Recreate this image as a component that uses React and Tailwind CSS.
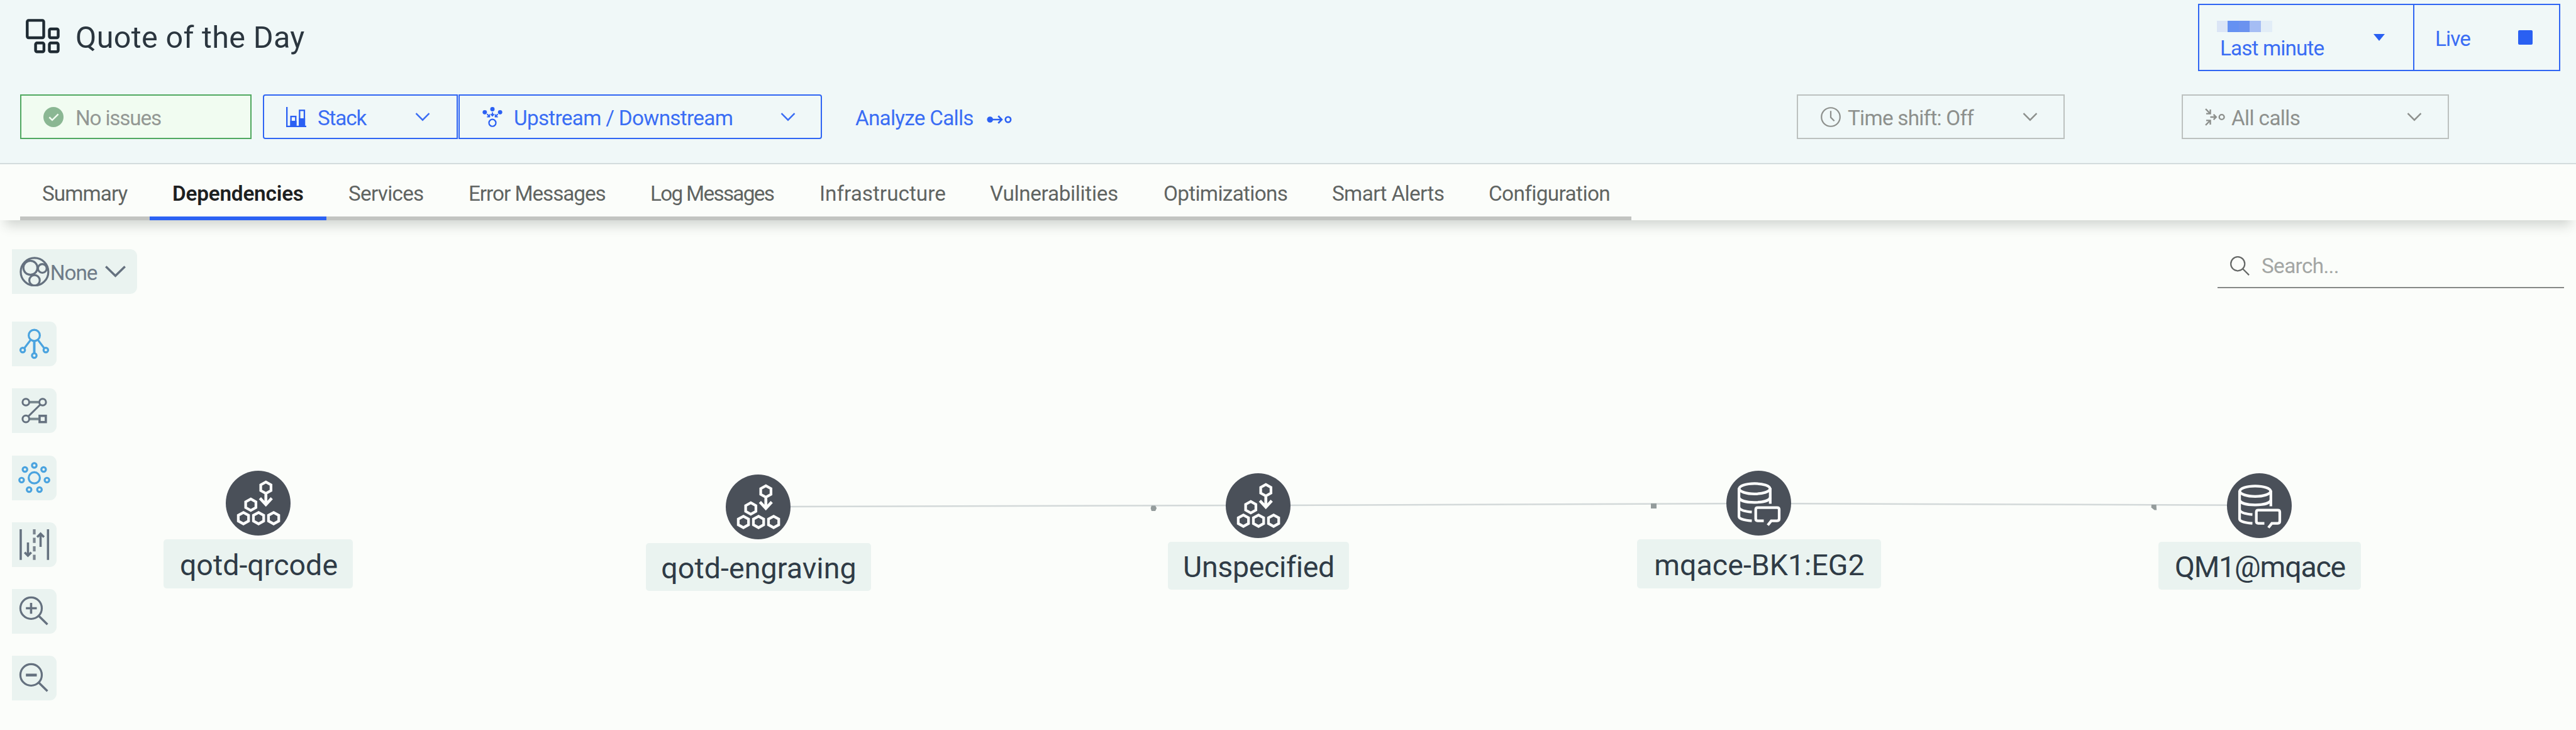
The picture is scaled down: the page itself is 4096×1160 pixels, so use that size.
const BLUE = "#2b60f3";

function Chevron({ className = "" }) {
  return (
    <svg viewBox="0 0 24 14" className={`h-[14px] w-[24px] ${className}`} fill="none" stroke="currentColor" strokeWidth="2.4">
      <path d="M1.5 1.2 L12 11.7 L22.5 1.2" />
    </svg>
  );
}

function AppIcon() {
  return (
    <svg viewBox="0 0 61 62" className="h-[55px] w-[54px]" fill="none" stroke="#1f2b33" strokeWidth="5">
      <rect x="2.6" y="2.6" width="29.6" height="31.2" rx="2.5" />
      <rect x="42.4" y="18" width="15.8" height="15.8" rx="2.5" />
      <rect x="17.6" y="43.2" width="15" height="15.8" rx="2.5" />
      <rect x="42.4" y="43.2" width="15.8" height="15.8" rx="2.5" />
    </svg>
  );
}

function CheckIcon() {
  return (
    <svg viewBox="0 0 36 36" className="size-8">
      <circle cx="18" cy="18" r="18" fill="#8ab793" />
      <path d="M10.5 18.3 L15.8 23.4 L26.6 12.8" fill="none" stroke="#f1fcf1" strokeWidth="2.8" />
    </svg>
  );
}

function StackIcon() {
  return (
    <svg viewBox="0 0 36 36" className="size-8" fill="none" stroke={BLUE} strokeWidth="2.6">
      <path d="M1.3 0 V34.7 H36" />
      <rect x="8.6" y="17" width="8.6" height="18" />
      <rect x="8.6" y="26" width="8.6" height="9" fill={BLUE} />
      <rect x="24" y="6" width="8.6" height="29" />
      <rect x="24" y="21.5" width="8.6" height="13" fill={BLUE} />
    </svg>
  );
}

function StreamIcon() {
  return (
    <svg viewBox="0 0 36 36" className="size-8" fill="none" stroke={BLUE} strokeWidth="2.5">
      <circle cx="18" cy="3.9" r="3.9" fill={BLUE} stroke="none" />
      <circle cx="4.3" cy="9.4" r="3.9" fill={BLUE} stroke="none" />
      <circle cx="31.7" cy="9.4" r="3.9" fill={BLUE} stroke="none" />
      <circle cx="18" cy="28.4" r="6.2" />
      <path d="M18 9.5 V16 M15 12.6 L18 15.8 L21 12.6" strokeWidth="2.1" />
      <path d="M8.4 12.6 L12.4 17.2 M12.8 12.8 V17.6 H8.2" strokeWidth="2.1" />
      <path d="M27.6 12.6 L23.6 17.2 M23.2 12.8 V17.6 H27.8" strokeWidth="2.1" />
    </svg>
  );
}

function CallsIcon() {
  return (
    <svg viewBox="0 0 45 16" className="h-[14px] w-[40px]" fill="none" stroke={BLUE} strokeWidth="3">
      <circle cx="5.6" cy="8" r="4" fill={BLUE} />
      <path d="M9 8 H27 M20.5 1.4 L27 8 L20.5 14.6" />
      <circle cx="38.4" cy="8" r="4.8" />
    </svg>
  );
}

function ClockIcon() {
  return (
    <svg viewBox="0 0 36 36" className="size-8" fill="none" stroke="currentColor" strokeWidth="2.5">
      <circle cx="18" cy="18" r="16.6" />
      <path d="M18 7 V18.6 L24.4 25" />
    </svg>
  );
}

function AllCallsIcon() {
  return (
    <svg viewBox="0 0 36 36" className="size-8" fill="none" stroke="currentColor" strokeWidth="2.7">
      <path d="M1.2 3.6 L9.4 11.8 M9.6 4.6 V12 H2.2" />
      <path d="M1.2 32.4 L9.4 24.2 M9.6 31.4 V24 H2.2" />
      <path d="M9.5 18 H20 M15.4 13.4 L20 18 L15.4 22.6" />
      <circle cx="30" cy="18" r="4.4" />
    </svg>
  );
}

function BubblesIcon() {
  return (
    <svg viewBox="0 0 54 54" className="size-[47.8px] shrink-0" fill="none" stroke="#65717f" strokeWidth="3.6">
      <circle cx="27" cy="27" r="24.8" />
      <circle cx="19.6" cy="19.8" r="12.6" />
      <circle cx="41" cy="21" r="7.8" />
      <circle cx="27" cy="42.4" r="9.4" />
    </svg>
  );
}

const SLATE = "#65717f";
const SKY = "#4aa3df";

function TreeGlyph() {
  return (
    <g stroke={SKY} strokeWidth="3.6">
      <circle cx="40" cy="24.7" r="10" />
      <path d="M33.4 33 L22 47.8 M46.6 33 L58 47.8" />
      <path d="M40 34 V57" strokeWidth="4.4" />
      <circle cx="19.3" cy="51" r="4.1" />
      <circle cx="40" cy="60.8" r="4.1" />
      <circle cx="60.7" cy="51" r="4.1" />
    </g>
  );
}

function PathGlyph() {
  return (
    <g stroke={SLATE} strokeWidth="3.4">
      <path d="M32 24.8 H48 M32 55 H48" strokeWidth="4.4" stroke="#7b8a91" />
      <path d="M50.4 29.6 L29.6 50" />
      <circle cx="25" cy="24.8" r="6" />
      <circle cx="55" cy="24.8" r="6" />
      <circle cx="25" cy="54.8" r="6" />
      <rect x="49.5" y="49.3" width="11.2" height="11.2" strokeWidth="4" />
    </g>
  );
}

const ORBIT = [[40, 17.5], [23.3, 24.8], [56.7, 24.8], [17.3, 43.8], [62.7, 43.8], [30.7, 60.8], [49.3, 60.8]];

function OrbitGlyph() {
  return (
    <g stroke={SKY} strokeWidth="3.6">
      <circle cx="40" cy="39.8" r="10" />
      {ORBIT.map(([x, y]) => (
        <circle key={`${x}-${y}`} cx={x} cy={y} r="4.1" />
      ))}
    </g>
  );
}

function LanesGlyph() {
  return (
    <g stroke={SLATE} strokeWidth="4">
      <path d="M15.7 12.5 V67.3 M64.6 12.5 V67.3" />
      <path d="M40 12.5 V67.3" strokeWidth="4.8" strokeDasharray="9.2 6" stroke="#7b858f" />
      <path d="M28.7 36 V60 M22.8 53.8 L28.7 59.8 L34.6 53.8" />
      <path d="M51.3 44 V20.5 M45.2 26.4 L51.3 20.4 L57.4 26.4" />
    </g>
  );
}

function ZoomGlyph({ plus }) {
  return (
    <g stroke={SLATE} strokeWidth="3.6">
      <circle cx="34.3" cy="34.3" r="19.2" />
      <path d="M47.8 47.8 L63.6 63.4" strokeWidth="3.9" />
      {plus ? <path d="M25 34.3 H44.5 M34.3 24.8 V44.2" strokeWidth="4" /> : <path d="M25 34.6 H44.5" strokeWidth="5" />}
    </g>
  );
}

const TOOLS = [
  ["hierarchy", <TreeGlyph key="t" />],
  ["path", <PathGlyph key="p" />],
  ["orbit", <OrbitGlyph key="o" />],
  ["lanes", <LanesGlyph key="l" />],
  ["zoom in", <ZoomGlyph key="zi" plus />],
  ["zoom out", <ZoomGlyph key="zo" />],
];

const hex = (cx, cy, r = 10.2) => {
  const w = r * 0.9;
  return `M${cx} ${cy - r} L${cx + w} ${cy - r / 2} V${cy + r / 2} L${cx} ${cy + r} L${cx - w} ${cy + r / 2} V${cy - r / 2} Z`;
};

function ServiceIcon() {
  return (
    <svg viewBox="0 0 116 116" className="size-[103px]" fill="none" stroke="#fcfdfc" strokeWidth="4.8">
      <circle cx="58" cy="58" r="58" fill="#4a5059" stroke="none" />
      <path d={hex(71.8, 30.4)} />
      <path d={hex(44.8, 60.8)} />
      <path d={hex(31.6, 84.9)} />
      <path d={hex(58.7, 84.9)} />
      <path d={hex(85.7, 84.9)} />
      <path d="M71.8 42 V60 M61.2 49.2 L71.8 60.6 L82.4 49.2" strokeWidth="5.2" />
    </svg>
  );
}

function QueueIcon() {
  return (
    <svg viewBox="0 0 116 116" className="size-[103px]" fill="none" stroke="#fcfdfc" strokeWidth="4.8">
      <circle cx="58" cy="58" r="58" fill="#4a5059" stroke="none" />
      <ellipse cx="50.6" cy="32.2" rx="27.6" ry="9.2" />
      <path d="M22.6 31 V82 C22.6 86 32 88.8 45.6 89.6 M78.6 31 V59" />
      <path d="M22.6 48 C24 53.6 36 56.6 50.6 56.6 C65 56.6 77 53.6 78.6 48" />
      <path d="M22.6 65.4 C24 69.6 32 72.8 45.6 73.8" />
      <path d="M67 89.6 H56 Q52.6 89.6 52.6 86 V69.6 Q52.6 66 56 66 H91 Q94.6 66 94.6 69.6 V86 Q94.6 89.6 91 89.6 H80.4 L74.2 97.4" />
    </svg>
  );
}

const TABS = [
  ["Summary", "w-[206px] pl-[35px] tracking-[-0.95px]"],
  ["Dependencies", "w-[281px] pl-[36px] tracking-[-0.2px]"],
  ["Services", "w-[192px] pl-[35px] tracking-[-0.75px]"],
  ["Error Messages", "w-[290px] pl-[34px] tracking-[-1.05px]"],
  ["Log Messages", "w-[268px] pl-[33px] tracking-[-1.7px]"],
  ["Infrastructure", "w-[271px] pl-[34px] tracking-[0px]"],
  ["Vulnerabilities", "w-[276px] pl-[34px] tracking-[-0.33px]"],
  ["Optimizations", "w-[268px] pl-[34px] tracking-[-0.68px]"],
  ["Smart Alerts", "w-[250px] pl-[34px] tracking-[-0.65px]"],
  ["Configuration", "w-[260px] pl-[33px] tracking-[-0.6px]"],
];

/* x, y: centre of the circle on the canvas */
const NODES = [
  { label: "qotd-qrcode", x: 410.5, y: 449, h: 78, w: 301, track: "tracking-[0.04px]", Icon: ServiceIcon },
  { label: "qotd-engraving", x: 1205.5, y: 455.5, h: 76, w: 358, track: "tracking-[0.1px]", Icon: ServiceIcon },
  { label: "Unspecified", x: 2000.5, y: 453.5, h: 76, w: 288, track: "tracking-[-0.35px]", Icon: ServiceIcon },
  { label: "mqace-BK1:EG2", x: 2796.5, y: 449, h: 78, w: 388, track: "tracking-[0.02px]", Icon: QueueIcon },
  { label: "QM1@mqace", x: 3592.5, y: 453.5, h: 76, w: 322, track: "tracking-[-1.2px]", Icon: QueueIcon },
];

function Node({ node }) {
  const { Icon } = node;
  return (
    <div
      className="absolute flex flex-col items-center gap-[6px]"
      style={{ left: node.x - node.w / 2, top: node.y - 51.5, width: node.w }}
    >
      <Icon />
      <div
        className={`flex w-full items-center justify-center rounded-[5px] bg-[#eaf3f0] pt-[5px] pl-[2px] text-[46.5px] leading-none whitespace-nowrap text-[#2f3b46] ${node.track}`}
        style={{ height: node.h }}
      >
        {node.label}
      </div>
    </div>
  );
}

export default function App() {
  return (
    <div className="flex h-[1160px] w-[4096px] flex-col overflow-hidden bg-[#fbfdfa] font-['Roboto',sans-serif] text-[33.3px] leading-none whitespace-nowrap">
      <header className="flex h-[261px] shrink-0 flex-col border-b-2 border-[#d3dcdd] bg-[#f0f8f8]">
        <div className="mt-[6px] flex h-[107px] justify-between pr-[25px] pl-[41px]">
          <div className="flex items-center">
            <div className="-mt-1">
              <AppIcon />
            </div>
            <h1 className="ml-[25px] pt-px text-[48.5px] tracking-[0.35px] text-[#2b363f]">Quote of the Day</h1>
          </div>
          <div className="flex w-[576px] border-2 border-[#2f65f3] text-[#3a6df4]">
            <div className="flex w-[342px] items-center border-r-2 border-[#2f65f3] pl-[28px]">
              <div className="flex h-full w-[230px] flex-col pt-[25px]">
                <div className="flex h-[18px]">
                  <span className="w-[17px] bg-[#dbe5f6]" />
                  <span className="w-[18px] bg-[#6591f2]" />
                  <span className="w-[17px] bg-[#6b92ef]" />
                  <span className="w-[18px] bg-[#a5bdf4]" />
                  <span className="w-[18px] bg-[#e2edf7]" />
                </div>
                <div className="mt-[9px] pl-[5px] tracking-[-0.88px]">Last minute</div>
              </div>
              <svg viewBox="0 0 18 11" className="ml-[19px] h-[11px] w-[18px]">
                <path d="M0 0 H18 L9 11 Z" fill="#2a60f2" />
              </svg>
            </div>
            <div className="flex flex-1 items-center justify-between pr-[42px] pl-[33px]">
              <span className="pt-[4px] tracking-[-0.87px]">Live</span>
              <span className="size-[23px] rounded-[2px] bg-[#2a60f2]" />
            </div>
          </div>
        </div>

        <div className="mt-[37px] flex h-[71px] items-stretch pr-[202px] pl-[32px]">
          <div className="flex w-[368px] items-center border-2 border-[#50a860] bg-[#f1fcf1] pl-[35px] text-[#939894]">
            <CheckIcon />
            <span className="ml-[19px] pt-[5px] tracking-[-1.2px]">No issues</span>
          </div>
          <div className="ml-[18px] flex w-[310px] items-center rounded-l-[4px] border-2 border-[#2f65f3] text-[#3a6df4]">
            <div className="ml-[35px]">
              <StackIcon />
            </div>
            <span className="ml-[18px] flex-1 pt-[5px] tracking-[-1.2px]">Stack</span>
            <Chevron className="mr-[42px]" />
          </div>
          <div className="ml-[1px] flex w-[578px] items-center rounded-r-[4px] border-2 border-[#2f65f3] text-[#3a6df4]">
            <div className="ml-[36px]">
              <StreamIcon />
            </div>
            <span className="ml-[18px] flex-1 pt-[5px] tracking-[-0.7px]">Upstream / Downstream</span>
            <Chevron className="mr-[40px]" />
          </div>
          <div className="ml-[53px] flex flex-1 items-center text-[#3a6df4]">
            <span className="pt-[5px] tracking-[-0.75px]">Analyze Calls</span>
            <div className="ml-[21px] pt-[8px]">
              <CallsIcon />
            </div>
          </div>
          <div className="flex w-[426px] items-center border-2 border-[#bcc1bf] pl-[36px] text-[#8d908d]">
            <ClockIcon />
            <span className="ml-[11px] flex-1 pt-[5px] tracking-[-0.76px]">Time shift: Off</span>
            <Chevron className="mr-[41px]" />
          </div>
          <div className="ml-[186px] flex w-[425px] items-center border-2 border-[#bcc1bf] pl-[35px] text-[#8d908d]">
            <AllCallsIcon />
            <span className="ml-[10px] flex-1 pt-[5px] tracking-[-0.64px]">All calls</span>
            <Chevron className="mr-[41px]" />
          </div>
        </div>
      </header>

      <nav className="relative z-10 flex h-[89px] shrink-0 bg-[#fbfdfa] pl-[32px] text-[#606462] shadow-[0_16px_18px_-8px_rgba(40,50,45,0.2)]">
        {TABS.map(([name, cls]) => (
          <div
            key={name}
            className={`flex shrink-0 items-center border-b-[6px] pt-[10px] ${cls} ${
              name === "Dependencies" ? "border-[#2c62f3] font-semibold text-[#1d2021]" : "border-[#c2c4c1]"
            }`}
          >
            {name}
          </div>
        ))}
      </nav>

      <main className="relative flex flex-1 justify-between pr-[19px] pl-[19px]">
        <aside className="flex flex-col items-start pt-[46px]">
          <div className="mb-[44px] flex h-[71px] w-[199px] items-center rounded-r-[11px] bg-[#eaf3f0] pl-[12px] text-[#6f7b88]">
            <BubblesIcon />
            <span className="ml-[1px] w-[87px] pt-[4px] tracking-[-1.07px]">None</span>
            <svg viewBox="0 0 36 20" className="h-[19px] w-[33px]" fill="none" stroke="#65717f" strokeWidth="3.8">
              <path d="M1.4 1.4 L18 17.4 L34.6 1.4" />
            </svg>
          </div>
          <div className="flex flex-col gap-[35.25px]">
            {TOOLS.map(([name, glyph]) => (
              <button key={name} aria-label={name} className="block size-[71px] rounded-r-[11px] bg-[#eaf3f0]">
                <svg viewBox="0 0 80 80" className="size-[71px]" fill="none">
                  {glyph}
                </svg>
              </button>
            ))}
          </div>
        </aside>

        <svg viewBox="0 0 4096 810" className="absolute top-0 left-0 h-[810px] w-[4096px]" fill="none">
          <path d="M1205 455.2 L2000 453 L2797 450 L3593 452.8" stroke="#d3d9d9" strokeWidth="2.5" />
          <g fill="#949c9c">
            <path d="M1831 453.5 h6 l2.2 4 -2.2 4.4 h-6 l-1.4 -4.4 Z" />
            <path d="M2625 450 h9 v8 h-9 Z" />
            <path d="M3421 452 h7.6 l.6 8.6 h-3.6 l-5 -4 Z" />
          </g>
        </svg>

        {NODES.map((node) => (
          <Node key={node.label} node={node} />
        ))}

        <div className="mt-[38px] flex h-[70px] w-[551px] items-center border-b-2 border-[#858886] pl-[20px] text-[#a3a6a4]">
          <svg viewBox="0 0 35 35" className="size-[31px]" fill="none" stroke="#666967" strokeWidth="2.5">
            <circle cx="13.8" cy="13.8" r="12.5" />
            <path d="M22.8 22.8 L34 34" />
          </svg>
          <span className="ml-[19px] pt-px tracking-[-0.65px]">Search...</span>
        </div>
      </main>
    </div>
  );
}
